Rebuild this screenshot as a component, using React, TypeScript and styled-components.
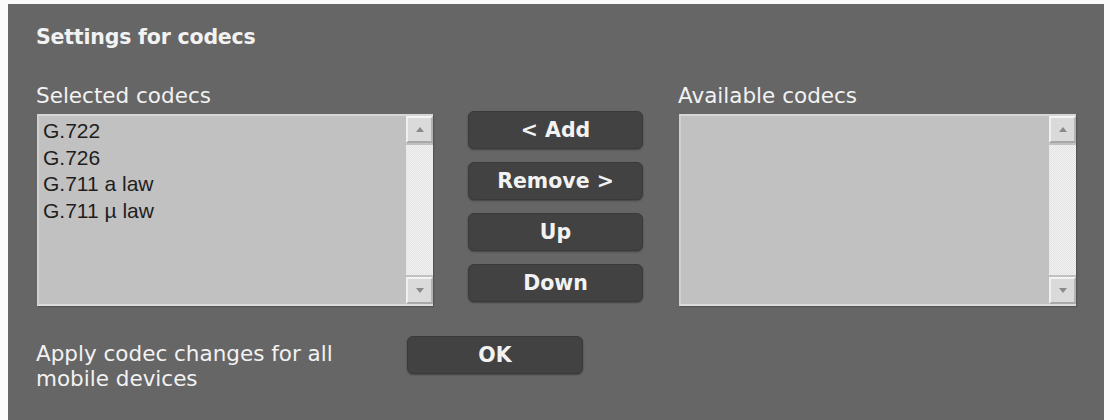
import React from 'react';
import styled, { createGlobalStyle } from 'styled-components';

const GlobalStyle = createGlobalStyle`
    html, body {
        margin: 0;
        padding: 0;
        background-color: #FAFAFA;
    }
`;

const Panel = styled.section`
    box-sizing: border-box;
    margin: 4px 0 0 8px;
    width: 1096px;
    height: 416px;
    padding: 21px 0 0 28px;
    background-color: #666666;
    color: #F2F2F2;
    font-family: "DejaVu Sans", Verdana, sans-serif;
`;

const Title = styled.h2`
    margin: 0;
    font-size: 20.5px;
    line-height: 24px;
    font-weight: bold;
    letter-spacing: -0.2px;
`;

const Lists = styled.div`
    display: grid;
    grid-template-columns: 397px 175px 398px;
    column-gap: 35px;
    margin-top: 34px;
`;

const Column = styled.div`
    display: flex;
    flex-direction: column;
`;

const Label = styled.div`
    font-size: 21.5px;
    line-height: 26px;
    margin-bottom: 5px;
    white-space: nowrap;
`;

const ListBox = styled.div`
    box-sizing: border-box;
    display: flex;
    margin-left: 1px;
    height: 192px;
    background-color: #C1C1C1;
    border-top: 2px solid #D6D6D6;
    border-left: 2px solid #D0D0D0;
    border-bottom: 2px solid #DCDCDC;
    box-shadow: 1px 1px 1px #555555;
`;

const Items = styled.ul`
    flex: 1;
    margin: 0;
    padding: 2px 0 0 4px;
    list-style: none;
    font-family: "Liberation Sans", Arial, sans-serif;
    font-size: 21px;
    line-height: 26.5px;
    color: #1E1E1E;
`;

const ScrollBar = styled.div`
    display: flex;
    flex-direction: column;
    width: 27px;
`;

const ArrowButton = styled.div`
    box-sizing: border-box;
    display: flex;
    align-items: center;
    justify-content: center;
    height: 27px;
    background-color: #DADADA;
    border-top: 2px solid #F4F4F4;
    border-left: 2px solid #F0F0F0;
    border-right: 2px solid #B4B4B4;
    border-bottom: 2px solid #A8A8A8;
`;

const Arrow = styled.span<{ $up?: boolean }>`
    width: 0;
    height: 0;
    border-left: 4px solid transparent;
    border-right: 4px solid transparent;
    ${p => p.$up
        ? 'border-bottom: 5px solid #8A8A8A;'
        : 'border-top: 5px solid #8A8A8A;'}
`;

const Track = styled.div`
    flex: 1;
    margin: 2px 0;
    background-color: #ECECEC;
    background-image: repeating-conic-gradient(#F3F3F3 0 25%, #E2E2E2 0 50%);
    background-size: 2px 2px;
`;

const Buttons = styled.div`
    display: flex;
    flex-direction: column;
    gap: 13px;
    margin-top: 28px;
`;

const Button = styled.button<{ $width?: number }>`
    box-sizing: border-box;
    width: ${p => p.$width ?? 175}px;
    height: 38px;
    padding: 0;
    background-color: #424242;
    border: 1px solid #3A3A3A;
    border-radius: 6px;
    box-shadow: 0 1px 2px rgba(0, 0, 0, 0.35);
    color: #F2F2F2;
    font-family: "DejaVu Sans", Verdana, sans-serif;
    font-size: 20.5px;
    font-weight: bold;
    cursor: pointer;
`;

const Footer = styled.div`
    display: grid;
    grid-template-columns: 371px auto;
    align-items: start;
    margin-top: 30px;
`;

const Note = styled.div`
    margin-top: 5px;
    font-size: 21.5px;
    line-height: 25px;
`;

const selected = ['G.722', 'G.726', 'G.711 a law', 'G.711 µ law'];
const available: string[] = [];

const CodecList = ({ label, items }: { label: string; items: string[] }) => (
    <Column>
        <Label>{label}</Label>
        <ListBox>
            <Items>
                {items.map(item => <li key={item}>{item}</li>)}
            </Items>
            <ScrollBar>
                <ArrowButton><Arrow $up /></ArrowButton>
                <Track />
                <ArrowButton><Arrow /></ArrowButton>
            </ScrollBar>
        </ListBox>
    </Column>
);

const App = () => (
    <>
        <GlobalStyle />
        <Panel>
            <Title>Settings for codecs</Title>
            <Lists>
                <CodecList label="Selected codecs" items={selected} />
                <Buttons>
                    <Button>&lt; Add</Button>
                    <Button>Remove &gt;</Button>
                    <Button>Up</Button>
                    <Button>Down</Button>
                </Buttons>
                <CodecList label="Available codecs" items={available} />
            </Lists>
            <Footer>
                <Note>Apply codec changes for all<br />mobile devices</Note>
                <Button $width={176}>OK</Button>
            </Footer>
        </Panel>
    </>
);

export default App;
